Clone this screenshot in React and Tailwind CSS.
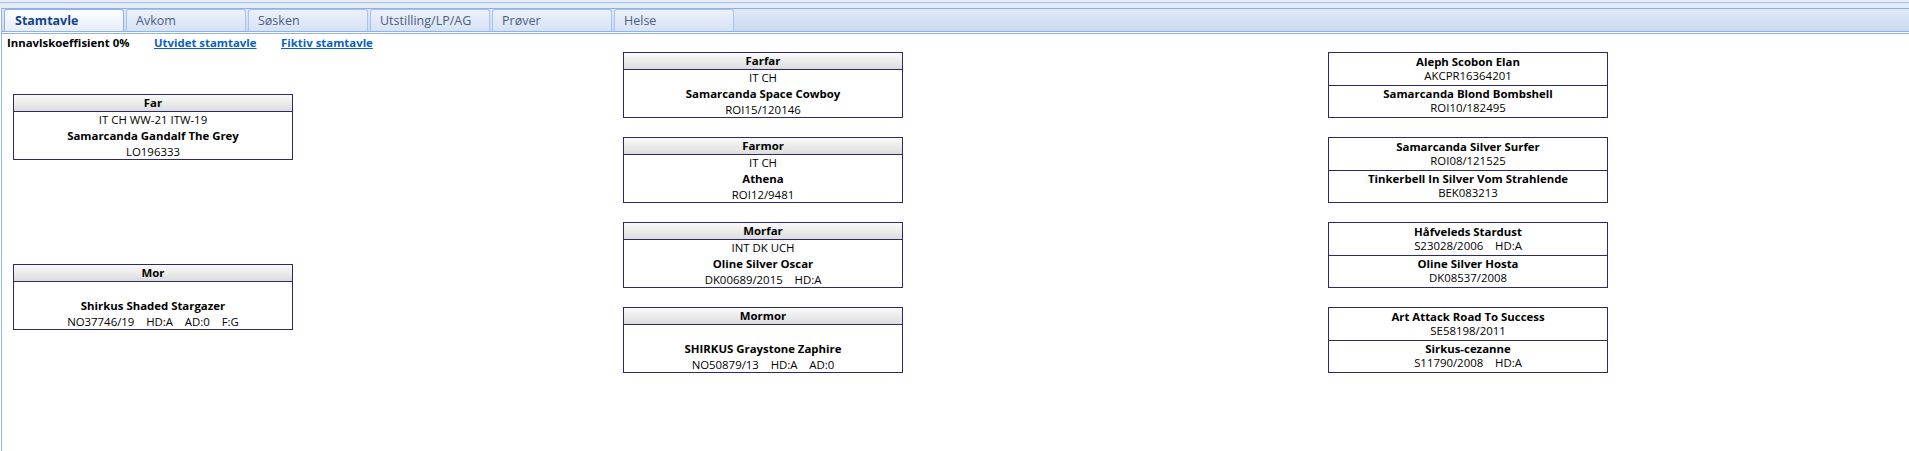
import React from "react";

const tabs = ["Stamtavle", "Avkom", "Søsken", "Utstilling/LP/AG", "Prøver", "Helse"];

const parents = [
    { title: "Far", rows: ["IT CH WW-21 ITW-19", "Samarcanda Gandalf The Grey", "LO196333"] },
    { title: "Mor", rows: ["", "Shirkus Shaded Stargazer", "NO37746/19    HD:A    AD:0    F:G"] },
];

const grandparents = [
    { title: "Farfar", rows: ["IT CH", "Samarcanda Space Cowboy", "ROI15/120146"] },
    { title: "Farmor", rows: ["IT CH", "Athena", "ROI12/9481"] },
    { title: "Morfar", rows: ["INT DK UCH", "Oline Silver Oscar", "DK00689/2015    HD:A"] },
    { title: "Mormor", rows: ["", "SHIRKUS Graystone Zaphire", "NO50879/13    HD:A    AD:0"] },
];

const greatGrandparents = [
    [
        { name: "Aleph Scobon Elan", reg: "AKCPR16364201" },
        { name: "Samarcanda Blond Bombshell", reg: "ROI10/182495" },
    ],
    [
        { name: "Samarcanda Silver Surfer", reg: "ROI08/121525" },
        { name: "Tinkerbell In Silver Vom Strahlende", reg: "BEK083213" },
    ],
    [
        { name: "Håfveleds Stardust", reg: "S23028/2006    HD:A" },
        { name: "Oline Silver Hosta", reg: "DK08537/2008" },
    ],
    [
        { name: "Art Attack Road To Success", reg: "SE58198/2011" },
        { name: "Sirkus-cezanne", reg: "S11790/2008    HD:A" },
    ],
];

function DogBox({ title, rows }) {
    return (
        <div className="w-[280px] h-[66px] border border-[#2d2a6a] flex flex-col bg-white">
            {/* Header */}
            <div className="h-[17px] border-b border-[#2d2a6a] bg-linear-to-b from-[#fbfbfb] to-[#dcdcdc] text-center font-bold leading-[16px]">
                {title}
            </div>
            <div className="flex-1 grid grid-rows-3 items-center text-center whitespace-pre leading-[15px]">
                <div>{rows[0]}</div>
                <div className="font-bold">{rows[1]}</div>
                <div>{rows[2]}</div>
            </div>
        </div>
    );
}

function PairBox({ pair }) {
    return (
        <div className="w-[280px] h-[66px] border border-[#2d2a6a] flex flex-col bg-white">
            {pair.map((dog, i) => (
                <div
                    key={i}
                    className={`flex-1 flex flex-col justify-center text-center leading-[14px] whitespace-pre ${i === 0 ? "border-b border-[#2d2a6a]" : ""}`}
                >
                    <div className="font-bold">{dog.name}</div>
                    <div>{dog.reg}</div>
                </div>
            ))}
        </div>
    );
}

export default function App() {
    return (
        <div className="h-[451px] w-full overflow-hidden bg-white font-['Open_Sans','Noto_Sans',sans-serif] text-[11.4px] leading-[16px] text-black">
            {/* Window top */}
            <div className="h-[2px] bg-[#e6edf8]" />
            <div className="h-px bg-[#a9c4ec]" />
            <div className="h-[5px] bg-[#e3ebf7]" />

            <div className="ml-px h-[443px] border-l border-[#95b5e6]">
                {/* Tab strip */}
                <div className="h-[24px] border-y border-[#8fb2e6] bg-linear-to-b from-[#dfe9f7] to-[#cbdaef] flex items-end gap-[2px] pl-[2px] text-[12.5px]">
                    {tabs.map((tab, i) => (
                        <div
                            key={tab}
                            className={
                                i === 0
                                    ? "h-[22px] w-[120px] rounded-t-[3px] border border-b-0 border-[#8fb2e6] bg-linear-to-b from-[#fdfeff] to-[#e5edf9] flex items-center px-[10px] font-bold text-[#15428b]"
                                    : "h-[22px] w-[120px] rounded-t-[3px] border border-b-0 border-[#a9c4ea] bg-linear-to-b from-[#ebf1fb] to-[#d6e2f4] flex items-center px-[9px] text-[#4f5e7e]"
                            }
                        >
                            {tab}
                        </div>
                    ))}
                </div>
                <div className="h-px bg-white" />
                <div className="h-px bg-[#8fb2e6]" />

                {/* Info line */}
                <div className="h-[18px] flex items-center pl-[5px] font-bold">
                    <span className="w-[147px]">Innavlskoeffisient 0%</span>
                    <span className="w-[127px] text-[#0a62c0] underline">Utvidet stamtavle</span>
                    <span className="text-[#0a62c0] underline">Fiktiv stamtavle</span>
                </div>

                {/* Pedigree */}
                <div className="flex pl-[11px]">
                    <div className="w-[280px] pt-[42px] flex flex-col gap-[104px]">
                        {parents.map((p) => (
                            <DogBox key={p.title} title={p.title} rows={p.rows} />
                        ))}
                    </div>
                    <div className="ml-[330px] w-[280px] flex flex-col gap-[19px]">
                        {grandparents.map((p) => (
                            <DogBox key={p.title} title={p.title} rows={p.rows} />
                        ))}
                    </div>
                    <div className="ml-[425px] w-[280px] flex flex-col gap-[19px]">
                        {greatGrandparents.map((pair, i) => (
                            <PairBox key={i} pair={pair} />
                        ))}
                    </div>
                </div>
            </div>
        </div>
    );
}
